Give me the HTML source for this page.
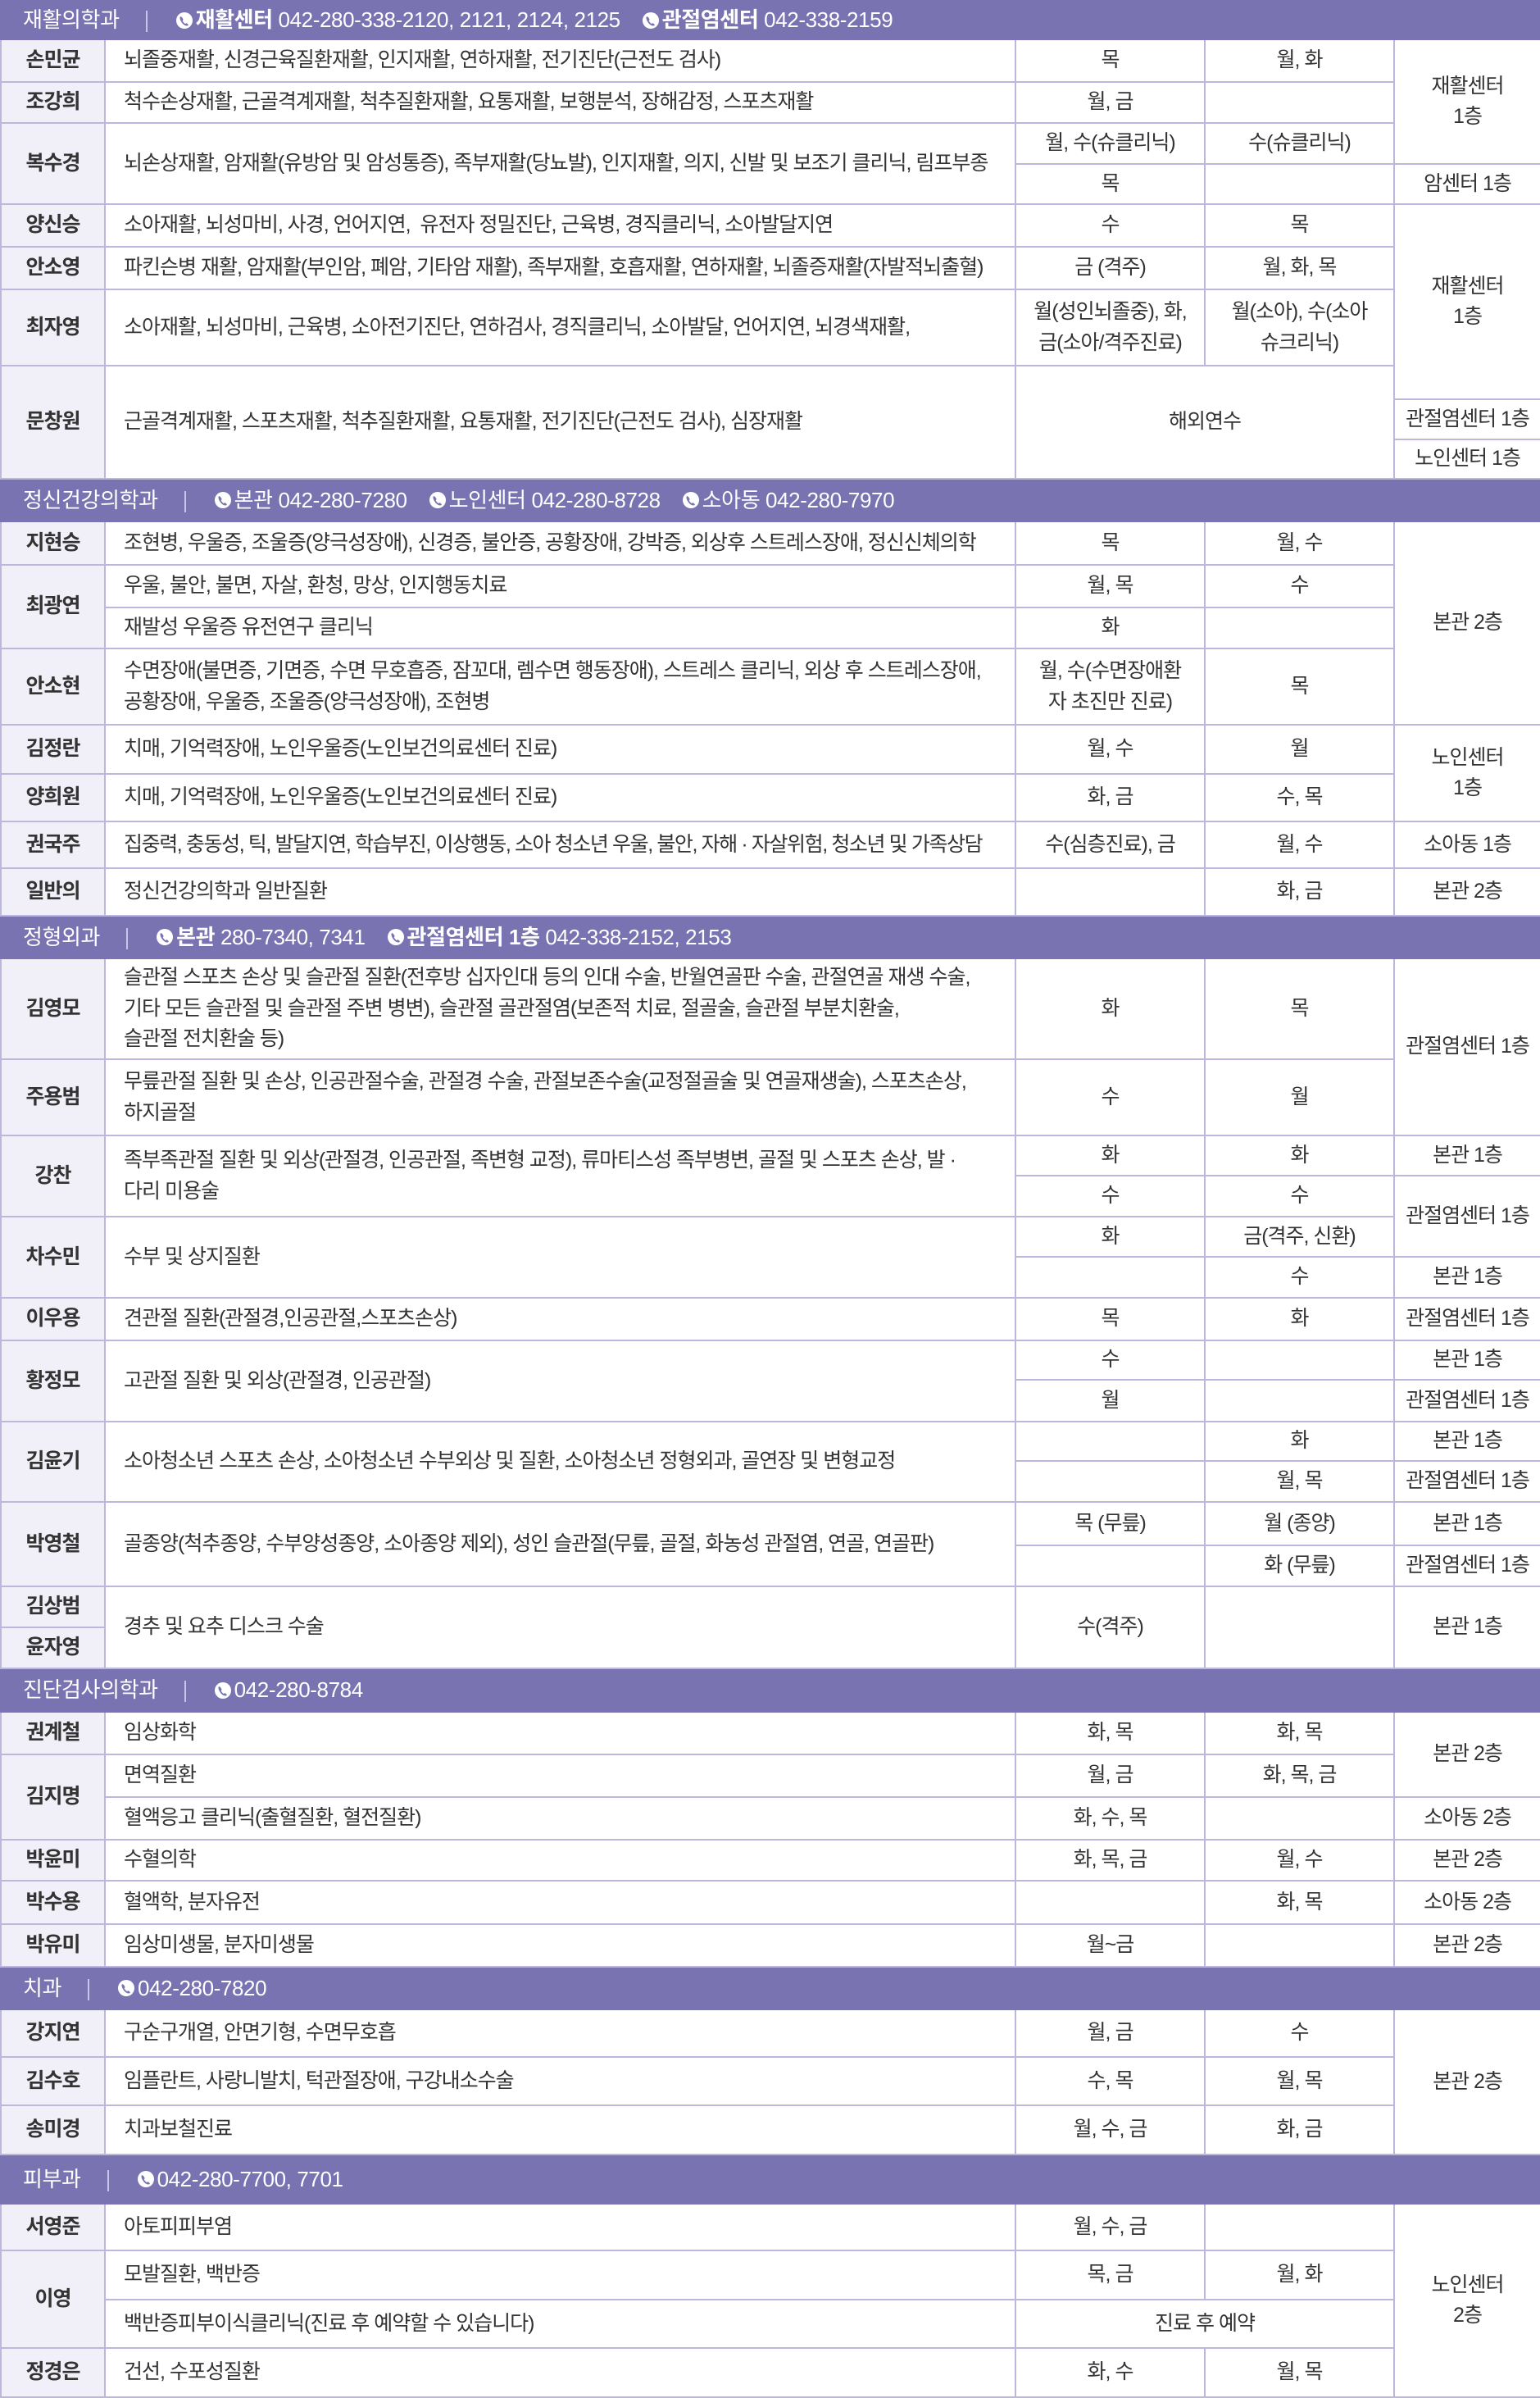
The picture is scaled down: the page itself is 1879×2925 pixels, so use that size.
<!DOCTYPE html>
<html><head><meta charset="utf-8">
<style>
html,body{margin:0;padding:0;background:#fff;}
body{width:1879px;height:2921px;overflow:hidden;}
table{border-collapse:collapse;table-layout:fixed;width:1879px;font-family:"Liberation Sans","Noto Sans CJK KR",sans-serif;color:#333;}
td{border:2px solid #bcb8dd;padding:0;font-size:25px;letter-spacing:-1px;text-align:center;vertical-align:middle;line-height:1.5;overflow:hidden;white-space:nowrap;}
td.n{background:#f1f0f8;font-weight:bold;letter-spacing:-1px;font-size:25px;}
td.d{text-align:left;padding-left:22px;}
td.h{background:#7a73b2;color:#fff;text-align:left;padding-left:26px;font-size:26px;letter-spacing:-0.4px;border-color:#7a73b2;}
.sep{display:inline-block;width:2px;height:26px;background:#c9c5e6;vertical-align:middle;margin:0 34px 0 32px;}
.ic{display:inline-block;vertical-align:middle;margin:0 3px 3px 0;}
.g{margin-left:26px;}
</style></head><body>
<table>
<colgroup><col style="width:127px"><col style="width:1111px"><col style="width:231px"><col style="width:231px"><col style="width:179px"></colgroup>

<tr style="height:47px"><td class="h" colspan="5">재활의학과<span class="sep"></span><svg class="ic" width="22" height="22" viewBox="0 0 22 22"><circle cx="11" cy="11" r="10" fill="#fff"/><path d="M6 6c-1 1.5-.5 4 1.5 7s4.5 4.5 6.5 4.5c1 0 1.8-.8 2-1.3l-2.5-2.2-1.2 1c-1.2-.4-3-2.3-3.6-3.8l1-1.2L8 7z" fill="#7a73b2"/></svg><b>재활센터</b> 042-280-338-2120, 2121, 2124, 2125<span class="g"></span><svg class="ic" width="22" height="22" viewBox="0 0 22 22"><circle cx="11" cy="11" r="10" fill="#fff"/><path d="M6 6c-1 1.5-.5 4 1.5 7s4.5 4.5 6.5 4.5c1 0 1.8-.8 2-1.3l-2.5-2.2-1.2 1c-1.2-.4-3-2.3-3.6-3.8l1-1.2L8 7z" fill="#7a73b2"/></svg><b>관절염센터</b> 042-338-2159</td></tr>

<tr style="height:52px"><td class="n">손민균</td><td class="d">뇌졸중재활, 신경근육질환재활, 인지재활, 연하재활, 전기진단(근전도 검사)</td><td>목</td><td>월, 화</td><td rowspan="3">재활센터<br>1층</td></tr>
<tr style="height:50px"><td class="n">조강희</td><td class="d">척수손상재활, 근골격계재활, 척추질환재활, 요통재활, 보행분석, 장해감정, 스포츠재활</td><td>월, 금</td><td></td></tr>
<tr style="height:50px"><td class="n" rowspan="2">복수경</td><td class="d" rowspan="2">뇌손상재활, 암재활(유방암 및 암성통증), 족부재활(당뇨발), 인지재활, 의지, 신발 및 보조기 클리닉, 림프부종</td><td>월, 수(슈클리닉)</td><td>수(슈클리닉)</td></tr>
<tr style="height:49px"><td>목</td><td></td><td>암센터 1층</td></tr>
<tr style="height:52px"><td class="n">양신승</td><td class="d">소아재활, 뇌성마비, 사경, 언어지연,&nbsp; 유전자 정밀진단, 근육병, 경직클리닉, 소아발달지연</td><td>수</td><td>목</td><td rowspan="4">재활센터<br>1층</td></tr>
<tr style="height:52px"><td class="n">안소영</td><td class="d">파킨슨병 재활, 암재활(부인암, 폐암, 기타암 재활), 족부재활, 호흡재활, 연하재활, 뇌졸증재활(자발적뇌출혈)</td><td>금 (격주)</td><td>월, 화, 목</td></tr>
<tr style="height:93px"><td class="n">최자영</td><td class="d">소아재활, 뇌성마비, 근육병, 소아전기진단, 연하검사, 경직클리닉, 소아발달, 언어지연, 뇌경색재활,</td><td>월(성인뇌졸중), 화,<br>금(소아/격주진료)</td><td>월(소아), 수(소아<br>슈크리닉)</td></tr>
<tr style="height:41px"><td class="n" rowspan="3">문창원</td><td class="d" rowspan="3">근골격계재활, 스포츠재활, 척추질환재활, 요통재활, 전기진단(근전도 검사), 심장재활</td><td colspan="2" rowspan="3">해외연수</td></tr>
<tr style="height:49px"><td>관절염센터 1층</td></tr>
<tr style="height:48px"><td>노인센터 1층</td></tr>

<tr style="height:52px"><td class="h" colspan="5">정신건강의학과<span class="sep"></span><svg class="ic" width="22" height="22" viewBox="0 0 22 22"><circle cx="11" cy="11" r="10" fill="#fff"/><path d="M6 6c-1 1.5-.5 4 1.5 7s4.5 4.5 6.5 4.5c1 0 1.8-.8 2-1.3l-2.5-2.2-1.2 1c-1.2-.4-3-2.3-3.6-3.8l1-1.2L8 7z" fill="#7a73b2"/></svg>본관 042-280-7280<span class="g"></span><svg class="ic" width="22" height="22" viewBox="0 0 22 22"><circle cx="11" cy="11" r="10" fill="#fff"/><path d="M6 6c-1 1.5-.5 4 1.5 7s4.5 4.5 6.5 4.5c1 0 1.8-.8 2-1.3l-2.5-2.2-1.2 1c-1.2-.4-3-2.3-3.6-3.8l1-1.2L8 7z" fill="#7a73b2"/></svg>노인센터 042-280-8728<span class="g"></span><svg class="ic" width="22" height="22" viewBox="0 0 22 22"><circle cx="11" cy="11" r="10" fill="#fff"/><path d="M6 6c-1 1.5-.5 4 1.5 7s4.5 4.5 6.5 4.5c1 0 1.8-.8 2-1.3l-2.5-2.2-1.2 1c-1.2-.4-3-2.3-3.6-3.8l1-1.2L8 7z" fill="#7a73b2"/></svg>소아동 042-280-7970</td></tr>

<tr style="height:53px"><td class="n">지현승</td><td class="d">조현병, 우울증, 조울증(양극성장애), 신경증, 불안증, 공황장애, 강박증, 외상후 스트레스장애, 정신신체의학</td><td>목</td><td>월, 수</td><td rowspan="4">본관 2층</td></tr>
<tr style="height:52px"><td class="n" rowspan="2">최광연</td><td class="d">우울, 불안, 불면, 자살, 환청, 망상, 인지행동치료</td><td>월, 목</td><td>수</td></tr>
<tr style="height:50px"><td class="d">재발성 우울증 유전연구 클리닉</td><td>화</td><td></td></tr>
<tr style="height:93px"><td class="n">안소현</td><td class="d">수면장애(불면증, 기면증, 수면 무호흡증, 잠꼬대, 렘수면 행동장애), 스트레스 클리닉, 외상 후 스트레스장애,<br>공황장애, 우울증, 조울증(양극성장애), 조현병</td><td>월, 수(수면장애환<br>자 초진만 진료)</td><td>목</td></tr>
<tr style="height:60px"><td class="n">김정란</td><td class="d">치매, 기억력장애, 노인우울증(노인보건의료센터 진료)</td><td>월, 수</td><td>월</td><td rowspan="2">노인센터<br>1층</td></tr>
<tr style="height:58px"><td class="n">양희원</td><td class="d">치매, 기억력장애, 노인우울증(노인보건의료센터 진료)</td><td>화, 금</td><td>수, 목</td></tr>
<tr style="height:57px"><td class="n">권국주</td><td class="d" style="letter-spacing:-1.4px">집중력, 충동성, 틱, 발달지연, 학습부진, 이상행동, 소아 청소년 우울, 불안, 자해 · 자살위험, 청소년 및 가족상담</td><td>수(심층진료), 금</td><td>월, 수</td><td>소아동 1층</td></tr>
<tr style="height:58px"><td class="n">일반의</td><td class="d">정신건강의학과 일반질환</td><td></td><td>화, 금</td><td>본관 2층</td></tr>

<tr style="height:52px"><td class="h" colspan="5">정형외과<span class="sep"></span><svg class="ic" width="22" height="22" viewBox="0 0 22 22"><circle cx="11" cy="11" r="10" fill="#fff"/><path d="M6 6c-1 1.5-.5 4 1.5 7s4.5 4.5 6.5 4.5c1 0 1.8-.8 2-1.3l-2.5-2.2-1.2 1c-1.2-.4-3-2.3-3.6-3.8l1-1.2L8 7z" fill="#7a73b2"/></svg><b>본관</b> 280-7340, 7341<span class="g"></span><svg class="ic" width="22" height="22" viewBox="0 0 22 22"><circle cx="11" cy="11" r="10" fill="#fff"/><path d="M6 6c-1 1.5-.5 4 1.5 7s4.5 4.5 6.5 4.5c1 0 1.8-.8 2-1.3l-2.5-2.2-1.2 1c-1.2-.4-3-2.3-3.6-3.8l1-1.2L8 7z" fill="#7a73b2"/></svg><b>관절염센터 1층</b> 042-338-2152, 2153</td></tr>

<tr style="height:123px"><td class="n">김영모</td><td class="d">슬관절 스포츠 손상 및 슬관절 질환(전후방 십자인대 등의 인대 수술, 반월연골판 수술, 관절연골 재생 수술,<br>기타 모든 슬관절 및 슬관절 주변 병변), 슬관절 골관절염(보존적 치료, 절골술, 슬관절 부분치환술,<br>슬관절 전치환술 등)</td><td>화</td><td>목</td><td rowspan="2">관절염센터 1층</td></tr>
<tr style="height:93px"><td class="n">주용범</td><td class="d">무릎관절 질환 및 손상, 인공관절수술, 관절경 수술, 관절보존수술(교정절골술 및 연골재생술), 스포츠손상,<br>하지골절</td><td>수</td><td>월</td></tr>
<tr style="height:49px"><td class="n" rowspan="2">강찬</td><td class="d" rowspan="2">족부족관절 질환 및 외상(관절경, 인공관절, 족변형 교정), 류마티스성 족부병변, 골절 및 스포츠 손상, 발 ·<br>다리 미용술</td><td>화</td><td>화</td><td>본관 1층</td></tr>
<tr style="height:50px"><td>수</td><td>수</td><td rowspan="2">관절염센터 1층</td></tr>
<tr style="height:49px"><td class="n" rowspan="2">차수민</td><td class="d" rowspan="2">수부 및 상지질환</td><td>화</td><td>금(격주, 신환)</td></tr>
<tr style="height:50px"><td></td><td>수</td><td>본관 1층</td></tr>
<tr style="height:52px"><td class="n">이우용</td><td class="d">견관절 질환(관절경,인공관절,스포츠손상)</td><td>목</td><td>화</td><td>관절염센터 1층</td></tr>
<tr style="height:48px"><td class="n" rowspan="2">황정모</td><td class="d" rowspan="2">고관절 질환 및 외상(관절경, 인공관절)</td><td>수</td><td></td><td>본관 1층</td></tr>
<tr style="height:51px"><td>월</td><td></td><td>관절염센터 1층</td></tr>
<tr style="height:48px"><td class="n" rowspan="2">김윤기</td><td class="d" rowspan="2">소아청소년 스포츠 손상, 소아청소년 수부외상 및 질환, 소아청소년 정형외과, 골연장 및 변형교정</td><td></td><td>화</td><td>본관 1층</td></tr>
<tr style="height:50px"><td></td><td>월, 목</td><td>관절염센터 1층</td></tr>
<tr style="height:53px"><td class="n" rowspan="2">박영철</td><td class="d" rowspan="2">골종양(척추종양, 수부양성종양, 소아종양 제외), 성인 슬관절(무릎, 골절, 화농성 관절염, 연골, 연골판)</td><td>목 (무릎)</td><td>월 (종양)</td><td>본관 1층</td></tr>
<tr style="height:50px"><td></td><td>화 (무릎)</td><td>관절염센터 1층</td></tr>
<tr style="height:50px"><td class="n">김상범</td><td class="d" rowspan="2">경추 및 요추 디스크 수술</td><td rowspan="2">수(격주)</td><td rowspan="2"></td><td rowspan="2">본관 1층</td></tr>
<tr style="height:50px"><td class="n">윤자영</td></tr>

<tr style="height:53px"><td class="h" colspan="5">진단검사의학과<span class="sep"></span><svg class="ic" width="22" height="22" viewBox="0 0 22 22"><circle cx="11" cy="11" r="10" fill="#fff"/><path d="M6 6c-1 1.5-.5 4 1.5 7s4.5 4.5 6.5 4.5c1 0 1.8-.8 2-1.3l-2.5-2.2-1.2 1c-1.2-.4-3-2.3-3.6-3.8l1-1.2L8 7z" fill="#7a73b2"/></svg>042-280-8784</td></tr>

<tr style="height:52px"><td class="n">권계철</td><td class="d">임상화학</td><td>화, 목</td><td>화, 목</td><td rowspan="2">본관 2층</td></tr>
<tr style="height:52px"><td class="n" rowspan="2">김지명</td><td class="d">면역질환</td><td>월, 금</td><td>화, 목, 금</td></tr>
<tr style="height:52px"><td class="d">혈액응고 클리닉(출혈질환, 혈전질환)</td><td>화, 수, 목</td><td></td><td>소아동 2층</td></tr>
<tr style="height:50px"><td class="n">박윤미</td><td class="d">수혈의학</td><td>화, 목, 금</td><td>월, 수</td><td>본관 2층</td></tr>
<tr style="height:53px"><td class="n">박수용</td><td class="d">혈액학, 분자유전</td><td></td><td>화, 목</td><td>소아동 2층</td></tr>
<tr style="height:52px"><td class="n">박유미</td><td class="d">임상미생물, 분자미생물</td><td>월~금</td><td></td><td>본관 2층</td></tr>

<tr style="height:52px"><td class="h" colspan="5">치과<span class="sep"></span><svg class="ic" width="22" height="22" viewBox="0 0 22 22"><circle cx="11" cy="11" r="10" fill="#fff"/><path d="M6 6c-1 1.5-.5 4 1.5 7s4.5 4.5 6.5 4.5c1 0 1.8-.8 2-1.3l-2.5-2.2-1.2 1c-1.2-.4-3-2.3-3.6-3.8l1-1.2L8 7z" fill="#7a73b2"/></svg>042-280-7820</td></tr>

<tr style="height:58px"><td class="n">강지연</td><td class="d">구순구개열, 안면기형, 수면무호흡</td><td>월, 금</td><td>수</td><td rowspan="3">본관 2층</td></tr>
<tr style="height:59px"><td class="n">김수호</td><td class="d">임플란트, 사랑니발치, 턱관절장애, 구강내소수술</td><td>수, 목</td><td>월, 목</td></tr>
<tr style="height:60px"><td class="n">송미경</td><td class="d">치과보철진료</td><td>월, 수, 금</td><td>화, 금</td></tr>

<tr style="height:60px"><td class="h" colspan="5">피부과<span class="sep"></span><svg class="ic" width="22" height="22" viewBox="0 0 22 22"><circle cx="11" cy="11" r="10" fill="#fff"/><path d="M6 6c-1 1.5-.5 4 1.5 7s4.5 4.5 6.5 4.5c1 0 1.8-.8 2-1.3l-2.5-2.2-1.2 1c-1.2-.4-3-2.3-3.6-3.8l1-1.2L8 7z" fill="#7a73b2"/></svg>042-280-7700, 7701</td></tr>

<tr style="height:57px"><td class="n">서영준</td><td class="d">아토피피부염</td><td>월, 수, 금</td><td></td><td rowspan="4">노인센터<br>2층</td></tr>
<tr style="height:60px"><td class="n" rowspan="2">이영</td><td class="d">모발질환, 백반증</td><td>목, 금</td><td>월, 화</td></tr>
<tr style="height:59px"><td class="d">백반증피부이식클리닉(진료 후 예약할 수 있습니다)</td><td colspan="2">진료 후 예약</td></tr>
<tr style="height:60px"><td class="n">정경은</td><td class="d">건선, 수포성질환</td><td>화, 수</td><td>월, 목</td></tr>
</table>
</body></html>
